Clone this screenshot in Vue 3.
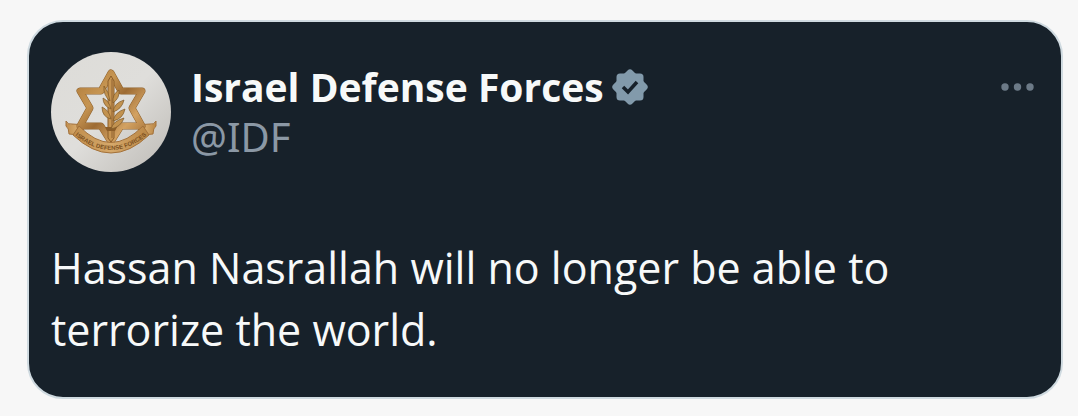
<template>
  <main class="page">
    <article class="tweet">
      <header class="tweet-header">
        <svg class="avatar" viewBox="0 0 120 120" role="img" aria-label="Israel Defense Forces emblem">
          <defs>
            <linearGradient id="disc" x1="0" y1="0" x2="1" y2="1">
              <stop offset="0" stop-color="#dddcd8" />
              <stop offset="0.5" stop-color="#dfdedb" />
              <stop offset="1" stop-color="#bdbab5" />
            </linearGradient>
            <linearGradient id="gold" x1="0" y1="0" x2="1" y2="1">
              <stop offset="0" stop-color="#b07c3c" />
              <stop offset="0.3" stop-color="#c69552" />
              <stop offset="0.5" stop-color="#9d6b33" />
              <stop offset="0.75" stop-color="#d3a262" />
              <stop offset="1" stop-color="#a47138" />
            </linearGradient>
            <linearGradient id="ribbon" x1="0" y1="0" x2="1" y2="0">
              <stop offset="0" stop-color="#c08d4c" />
              <stop offset="0.5" stop-color="#d6a96b" />
              <stop offset="1" stop-color="#b98544" />
            </linearGradient>
            <path id="motto" d="M24 83 Q60 113 96 83" />
          </defs>
          <circle cx="60" cy="60" r="60" fill="url(#disc)" />
          <!-- folded ribbon ends -->
          <g fill="url(#ribbon)" stroke="#a3713a" stroke-width="1" stroke-linejoin="round">
            <path d="M15 69 Q17 73 21 72 L36 73 L28 83 L18 82 Q18 76 15 74 Z" />
            <path d="M105 69 Q103 73 99 72 L84 73 L92 83 L102 82 Q102 76 105 74 Z" />
          </g>
          <!-- star -->
          <path
            d="M60 21 L70 39 H91 L81 56 L91 74 H70 L60 90 L50 74 H29 L39 56 L29 39 H50 Z"
            fill="none"
            stroke="#8e602a"
            stroke-width="7"
            stroke-linejoin="round"
          />
          <path
            d="M60 21 L70 39 H91 L81 56 L91 74 H70 L60 90 L50 74 H29 L39 56 L29 39 H50 Z"
            fill="none"
            stroke="url(#gold)"
            stroke-width="6"
            stroke-linejoin="round"
          />
          <!-- sword -->
          <path d="M57 29 L60 24 L63 29 V86 L60 90 L57 86 Z" fill="#c79552" stroke="#8a5c28" stroke-width="1" />
          <path d="M61 27 V86" stroke="#8f6130" stroke-width="1" />
          <path d="M54 75 H66 L64 79 H56 Z" fill="#8c5d28" />
          <!-- olive branch -->
          <g fill="#c2924f" stroke="#7d5826" stroke-width="0.7" stroke-linejoin="round">
            <path d="M59 49 Q52 43 53 34 Q58 40 59 49 Z" />
            <path d="M60 57 Q52 54 52 46 Q58 49 60 57 Z" />
            <path d="M60 67 Q51 65 51 55 Q58 58 60 67 Z" />
            <path d="M62 51 Q61 42 68 38 Q69 46 62 51 Z" />
            <path d="M62 60 Q63 51 73 48 Q71 57 62 60 Z" />
            <path d="M62 69 Q64 60 74 57 Q72 67 62 69 Z" />
            <path d="M60 77 Q62 69 73 66 Q70 75 60 77 Z" />
          </g>
          <!-- motto ribbon -->
          <path
            d="M28 74 Q60 107 92 74 L98 83 Q60 119 22 83 Z"
            fill="url(#ribbon)"
            stroke="#a3713a"
            stroke-width="1"
            stroke-linejoin="round"
          />
          <text class="motto">
            <textPath href="#motto" startOffset="50%" text-anchor="middle">ISRAEL DEFENSE FORCES</textPath>
          </text>
        </svg>

        <div class="author">
          <div class="name-row">
            <span class="name">Israel Defense Forces</span>
            <svg class="verified" viewBox="0 0 36 36" role="img" aria-label="Verified account">
              <rect x="4.5" y="4.5" width="27" height="27" rx="3.5" />
              <rect x="4.5" y="4.5" width="27" height="27" rx="3.5" transform="rotate(45 18 18)" />
              <path d="M11 18 L16 23 L25 13" />
            </svg>
          </div>
          <span class="handle">@IDF</span>
        </div>

        <button class="more" type="button" aria-label="More">
          <svg viewBox="0 0 34 10" aria-hidden="true">
            <circle cx="5" cy="5" r="3.7" />
            <circle cx="17.5" cy="5" r="3.7" />
            <circle cx="30" cy="5" r="3.7" />
          </svg>
        </button>
      </header>

      <p class="tweet-text">{{ text }}</p>
    </article>
  </main>
</template>

<script setup>
const text = 'Hassan Nasrallah will no longer be able to terrorize the world.'
</script>

<style>
body {
  background: #f7f7f7;
}
</style>

<style scoped>
.page {
  padding: 20px 15px 17px 27px;
  font-family: 'Open Sans', sans-serif;
}

.tweet {
  padding: 30px 22px 36px;
  border: 2px solid #cfdae0;
  border-radius: 36px;
  background: #17212a;
  color: #f7f9f9;
}

.tweet-header {
  display: flex;
  align-items: flex-start;
  gap: 20px;
}

.avatar {
  flex: none;
  width: 120px;
  height: 120px;
}

.motto {
  font-family: 'Liberation Sans', sans-serif;
  font-size: 6px;
  font-weight: 700;
  fill: #7a4f20;
}

.author {
  flex: 1;
  padding-top: 10px;
}

.name-row {
  display: flex;
  align-items: center;
  gap: 8px;
}

.name {
  font-size: 39px;
  line-height: 50px;
  font-weight: 700;
}

.verified {
  width: 36px;
  height: 36px;
  fill: #829aab;
}

.verified path {
  fill: none;
  stroke: #17212a;
  stroke-width: 3.5;
}

.handle {
  display: block;
  font-family: 'Noto Sans', sans-serif;
  font-size: 40px;
  line-height: 50px;
  color: #8b98a5;
}

.more {
  display: flex;
  margin: 30px 5px 0 0;
  padding: 0;
  border: 0;
  background: none;
  cursor: pointer;
}

.more svg {
  width: 34px;
  height: 10px;
  fill: #6c7a87;
}

.tweet-text {
  margin: 65px 0 0;
  font-size: 43px;
  line-height: 62px;
}
</style>
